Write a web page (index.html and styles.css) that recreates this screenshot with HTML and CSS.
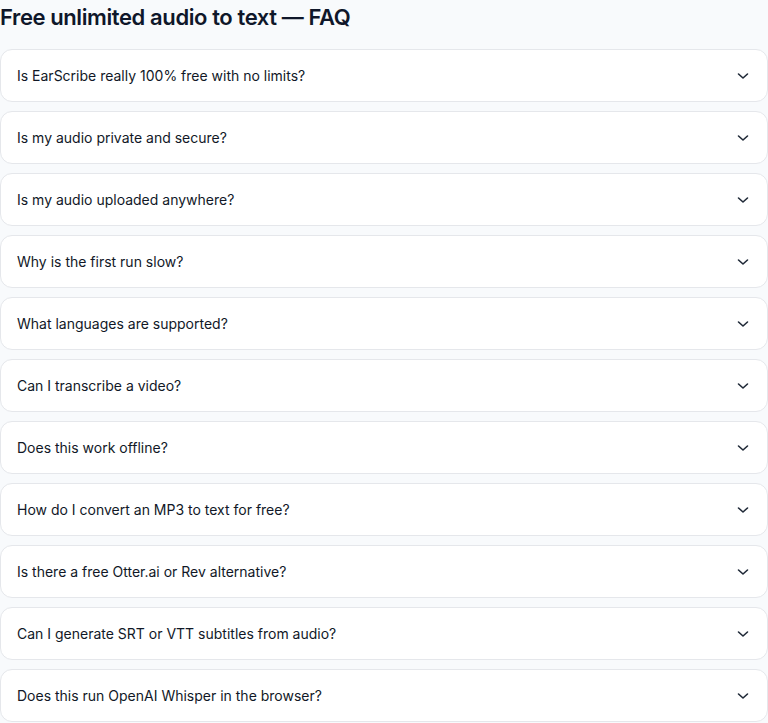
FILE: index.html
```html
<!DOCTYPE html>
<html lang="en">
<head>
<meta charset="utf-8">
<title>FAQ</title>
<link rel="stylesheet" href="styles.css">
</head>
<body>
<section class="faq">
  <h2 class="faq-title">Free unlimited audio to text — FAQ</h2>
  <div class="faq-list">
    <div class="faq-item"><span class="q">Is EarScribe really 100% free with no limits?</span><svg class="chev" viewBox="0 0 16 16"><path d="M3.5 6l4.5 4 4.5-4"/></svg></div>
    <div class="faq-item"><span class="q">Is my audio private and secure?</span><svg class="chev" viewBox="0 0 16 16"><path d="M3.5 6l4.5 4 4.5-4"/></svg></div>
    <div class="faq-item"><span class="q">Is my audio uploaded anywhere?</span><svg class="chev" viewBox="0 0 16 16"><path d="M3.5 6l4.5 4 4.5-4"/></svg></div>
    <div class="faq-item"><span class="q">Why is the first run slow?</span><svg class="chev" viewBox="0 0 16 16"><path d="M3.5 6l4.5 4 4.5-4"/></svg></div>
    <div class="faq-item"><span class="q">What languages are supported?</span><svg class="chev" viewBox="0 0 16 16"><path d="M3.5 6l4.5 4 4.5-4"/></svg></div>
    <div class="faq-item"><span class="q">Can I transcribe a video?</span><svg class="chev" viewBox="0 0 16 16"><path d="M3.5 6l4.5 4 4.5-4"/></svg></div>
    <div class="faq-item"><span class="q">Does this work offline?</span><svg class="chev" viewBox="0 0 16 16"><path d="M3.5 6l4.5 4 4.5-4"/></svg></div>
    <div class="faq-item"><span class="q">How do I convert an MP3 to text for free?</span><svg class="chev" viewBox="0 0 16 16"><path d="M3.5 6l4.5 4 4.5-4"/></svg></div>
    <div class="faq-item"><span class="q">Is there a free Otter.ai or Rev alternative?</span><svg class="chev" viewBox="0 0 16 16"><path d="M3.5 6l4.5 4 4.5-4"/></svg></div>
    <div class="faq-item"><span class="q">Can I generate SRT or VTT subtitles from audio?</span><svg class="chev" viewBox="0 0 16 16"><path d="M3.5 6l4.5 4 4.5-4"/></svg></div>
    <div class="faq-item"><span class="q">Does this run OpenAI Whisper in the browser?</span><svg class="chev" viewBox="0 0 16 16"><path d="M3.5 6l4.5 4 4.5-4"/></svg></div>
  </div>
</section>
</body>
</html>
```
FILE: styles.css
```css
html, body {
  margin: 0;
  padding: 0;
  background: #f8fafc;
  font-family: Inter, "Noto Sans", sans-serif;
  color: #111827;
}
.faq {
  padding-top: 3px;
}
.faq-title {
  margin: 0 0 18px 0;
  font-size: 22px;
  line-height: 28px;
  font-weight: 600;
  letter-spacing: -0.4px;
  color: #0f172a;
}
.faq-list {
  display: flex;
  flex-direction: column;
  gap: 9px;
}
.faq-item {
  display: flex;
  align-items: center;
  justify-content: space-between;
  background: #ffffff;
  border: 1px solid #e5e7eb;
  border-radius: 12px;
  padding: 15px 16px;
  min-height: 21px;
}
.q {
  font-size: 14px;
  line-height: 21px;
  font-weight: 400;
  color: #111827;
}
.chev {
  width: 16px;
  height: 16px;
  margin-right: 0;
  fill: none;
  stroke: #1f2937;
  stroke-width: 1.6;
  stroke-linecap: round;
  stroke-linejoin: round;
}
```
